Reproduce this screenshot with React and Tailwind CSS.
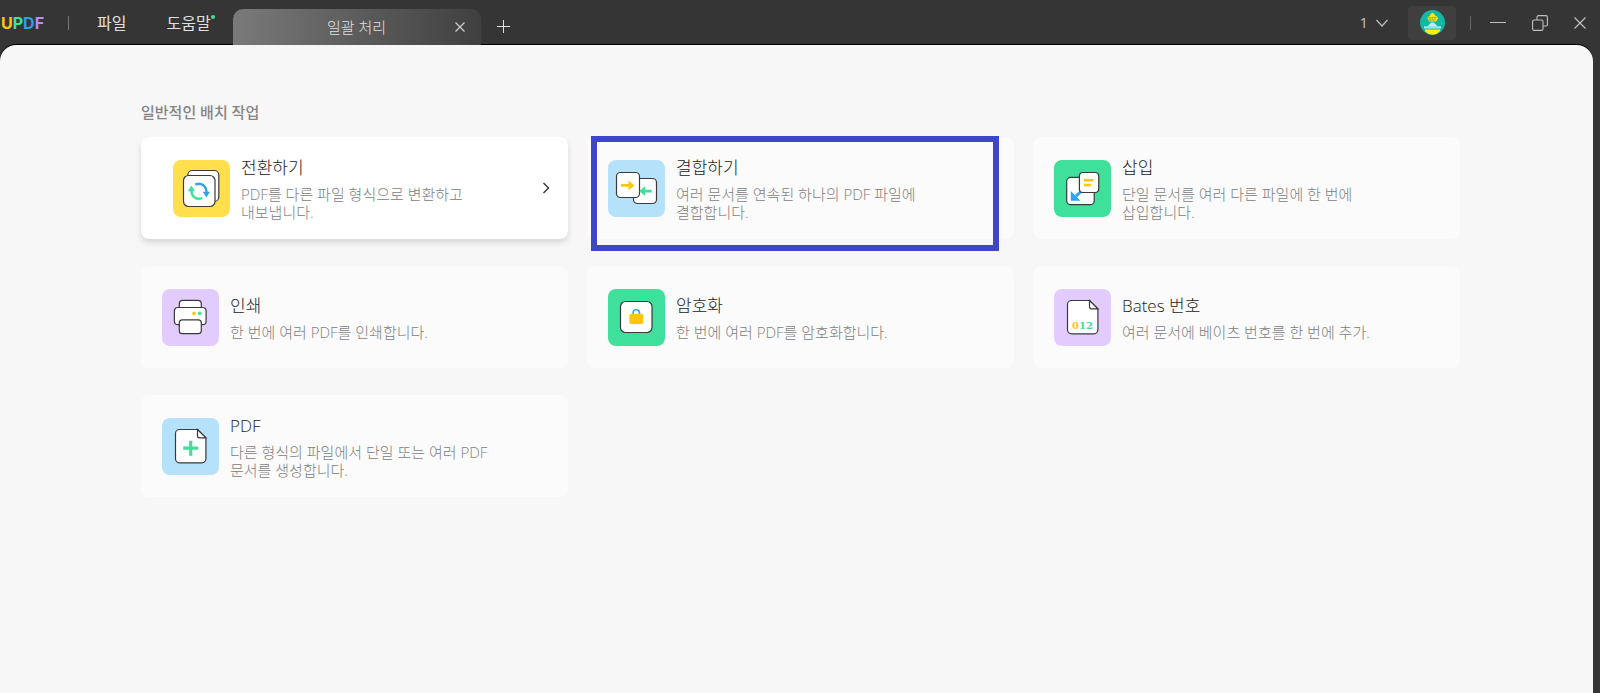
import React from 'react';

const ink = { stroke: '#3a3a3a', strokeWidth: 1.2, fill: '#fff' };

function ConvertIcon() {
  return (
    <svg viewBox="0 0 57 57" className="w-full h-full">
      <path d="M14.800 16v-1a4.500 4.500 0 0 1 4.500-4.500h22a4.500 4.500 0 0 1 4.500 4.500v22a4.500 4.500 0 0 1-4.500 4.500h-1z" {...ink} />
      <rect x="10.5" y="15.5" width="31.5" height="31" rx="5" {...ink} />
      <path d="M22.3 24.6C28 21.8 33.3 26 33.4 32" fill="none" stroke="#2ea3f2" strokeWidth="2.4" />
      <path d="M29.800 31.8h7.2l-3.600 5.8z" fill="#2ea3f2" />
      <path d="M18.4 30.5C18.4 36.5 23.5 40.5 29.3 38" fill="none" stroke="#3ee09c" strokeWidth="2.4" />
      <path d="M14.800 31.200h7.2l-3.600-5.8z" fill="#3ee09c" />
    </svg>
  );
}

function CombineIcon() {
  return (
    <svg viewBox="0 0 57 57" className="w-full h-full">
      <rect x="25.5" y="18.5" width="23" height="25" rx="4" {...ink} />
      <rect x="8.5" y="12.5" width="23" height="25" rx="4" {...ink} />
      <path d="M13 24.1h7.5v-3.5l6 4.8-6 4.8v-3.5H13z" fill="#ffc60b" />
      <path d="M43.7 29.700h-6.5v-3.4l-6 4.8 6 4.8v-3.4h6.5z" fill="#3ee09c" />
    </svg>
  );
}

function InsertIcon() {
  return (
    <svg viewBox="0 0 57 57" className="w-full h-full">
      <rect x="12.7" y="17.4" width="27.5" height="27.3" rx="4" {...ink} />
      <path d="M27 31.500l-5 4.600" stroke="#2ea3f2" strokeWidth="3" />
      <path d="M16.800 31v9.700h9.700z" fill="#2ea3f2" />
      <rect x="25.4" y="12.5" width="19.3" height="20" rx="3.5" {...ink} />
      <path d="M30 20.3h9.6M30 25h7" stroke="#ffc60b" strokeWidth="2.4" />
    </svg>
  );
}

function PrintIcon() {
  return (
    <svg viewBox="0 0 57 57" className="w-full h-full">
      <rect x="17.3" y="11.4" width="22" height="14" rx="3.5" {...ink} />
      <rect x="12.4" y="18.5" width="31.7" height="17.2" rx="3.5" {...ink} />
      <rect x="17.3" y="30.8" width="22" height="13.9" rx="3" {...ink} />
      <circle cx="32" cy="24.4" r="1.8" fill="#ffc60b" />
      <circle cx="37.7" cy="24.4" r="1.8" fill="#3ee09c" />
    </svg>
  );
}

function EncryptIcon() {
  return (
    <svg viewBox="0 0 57 57" className="w-full h-full">
      <rect x="12.5" y="12.5" width="31.5" height="31" rx="5" {...ink} />
      <path d="M25.1 25v-1a3.2 3.2 0 0 1 6.4 0v1" fill="none" stroke="#2ea3f2" strokeWidth="1.6" />
      <rect x="21.3" y="24.7" width="14" height="10.4" rx="1.8" fill="#ffc60b" />
    </svg>
  );
}

function PageShape() {
  return (
    <>
      <path d="M17.5 11.5h18l8.4 8.3v21a4 4 0 0 1-4 4H17.5a4 4 0 0 1-4-4V15.5a4 4 0 0 1 4-4z" {...ink} />
      <path d="M35.5 11.5v6.3a2 2 0 0 0 2 2h6.400z" {...ink} />
    </>
  );
}

function BatesIcon() {
  return (
    <svg viewBox="0 0 57 57" className="w-full h-full">
      <PageShape />
      <text x="18" y="39.5" fontSize="10" className="font-['DejaVu_Serif',serif] font-bold" fill="#3ee09c">
        <tspan fill="#ffc60b">0</tspan>12
      </text>
    </svg>
  );
}

function CreateIcon() {
  return (
    <svg viewBox="0 0 57 57" className="w-full h-full">
      <PageShape />
      <path d="M28.7 22.7v15M21.2 30.2h15" stroke="#3ee09c" strokeWidth="3.2" />
    </svg>
  );
}

function Avatar() {
  return (
    <svg viewBox="0 0 25 25" className="w-[25px] h-[25px]">
      <circle cx="12.5" cy="12.5" r="12.5" fill="#12b8a6" />
      <path d="M7.5 8.5c0-1.500 1-2.300 2.300-2.600 0-1.500 1.400-2.500 2.700-3.200 1.200.8 2.700 1.600 2.900 3.200 1.500.3 2.700 1.200 2.700 2.700L16 11.500H9.500z" fill="#f4e51c" />
      <path d="M8.500 7.800h8M9.500 9.900h6" stroke="#7d8320" strokeWidth="1" strokeDasharray="2 .8" />
      <path d="M8 16.500c.5-2 2.300-2.500 3.300-4h2.400c1 1.500 3 2 3.500 4z" fill="#c4ecf7" />
      <rect x="4" y="16.3" width="17" height="2.2" fill="#a9e4ee" />
      <path d="M5 19.6h15v1.500c-2 2.300-4.500 3.600-7.500 3.600S7 23.400 5 21.100z" fill="#fff200" />
    </svg>
  );
}

const tasks = [
  {
    title: '전환하기',
    desc: 'PDF를 다른 파일 형식으로 변환하고 내보냅니다.',
    icon: ConvertIcon,
    tile: 'bg-[#ffe04c]',
    active: true,
  },
  {
    title: '결합하기',
    desc: '여러 문서를 연속된 하나의 PDF 파일에 결합합니다.',
    icon: CombineIcon,
    tile: 'bg-[#b5e1fb]',
    marked: true,
  },
  {
    title: '삽입',
    desc: '단일 문서를 여러 다른 파일에 한 번에 삽입합니다.',
    icon: InsertIcon,
    tile: 'bg-[#3ee09c]',
  },
  { title: '인쇄', desc: '한 번에 여러 PDF를 인쇄합니다.', icon: PrintIcon, tile: 'bg-[#e2ccff]' },
  { title: '암호화', desc: '한 번에 여러 PDF를 암호화합니다.', icon: EncryptIcon, tile: 'bg-[#3ee09c]' },
  { title: 'Bates 번호', desc: '여러 문서에 베이츠 번호를 한 번에 추가.', icon: BatesIcon, tile: 'bg-[#e2ccff]' },
  {
    title: 'PDF',
    desc: '다른 형식의 파일에서 단일 또는 여러 PDF 문서를 생성합니다.',
    icon: CreateIcon,
    tile: 'bg-[#b5e1fb]',
  },
];

function TaskCard({ task }) {
  const Icon = task.icon;
  return (
    <button
      className={`relative flex items-center gap-[11px] min-h-[102px] rounded-lg text-left ${
        task.active ? 'bg-white pl-8 pr-4 shadow-[0_4px_6px_rgba(0,0,0,0.12)]' : 'bg-[#fbfbfb] pl-[21px] pr-4'
      }`}
    >
      <span className={`w-[57px] h-[57px] shrink-0 rounded-lg ${task.tile}`}>
        <Icon />
      </span>
      <span className="flex flex-col gap-1 max-w-[260px]">
        <span className="text-[17px] leading-[26px] font-light text-[#222]">{task.title}</span>
        <span className="text-[15px] leading-[18px] font-light text-[#808080] break-keep">{task.desc}</span>
      </span>
      {task.active && (
        <svg viewBox="0 0 12 12" className="w-3 h-3 ml-auto" fill="none" stroke="#333" strokeWidth="1.4">
          <path d="M3.5 1l5 5-5 5" />
        </svg>
      )}
      {/* Highlight frame */}
      {task.marked && (
        <span className="absolute -top-px left-1 right-[15px] -bottom-3 border-[6px] border-[#3f45cb]"></span>
      )}
    </button>
  );
}

export default function App() {
  return (
    <div className="min-h-screen flex flex-col bg-[#353535] font-['Open_Sans','Noto_Sans_CJK_KR',sans-serif]">
      {/* Title bar */}
      <header className="relative z-10 h-[45px] flex items-center justify-between text-[#e0e0e0]">
        <div className="flex items-center self-stretch">
          <span className="pl-px w-[68px] font-['Inter',sans-serif] font-bold text-base">
            <span className="text-[#ffc60b]">U</span>
            <span className="text-[#3ee09c]">P</span>
            <span className="text-[#2e9fe6]">D</span>
            <span className="text-[#b98cff]">F</span>
          </span>
          <span className="w-px h-3.5 bg-[#777]"></span>
          <button className="ml-7 text-base">파일</button>
          <button className="relative ml-10 text-base">
            도움말
            <span className="absolute top-1 -right-1 w-1 h-1 rounded-full bg-[#3ee09c]"></span>
          </button>
          <div className="self-end ml-[22px] w-[248px] h-9 flex items-center rounded-t-[10px] bg-linear-to-r from-[#7a7a7a] to-[#404040] pl-[58px] pr-4">
            <span className="flex-1 text-center text-[15px] leading-5 font-light text-[#e0e0e0]">일괄 처리</span>
            <button aria-label="탭 닫기" className="ml-8">
              <svg viewBox="0 0 10 10" className="w-2.5 h-2.5" stroke="#d0d0d0" strokeWidth="1.2">
                <path d="M.5.5l9 9M9.5.5l-9 9" />
              </svg>
            </button>
          </div>
          <button aria-label="새 탭" className="ml-4 mt-2">
            <svg viewBox="0 0 13 13" className="w-[13px] h-[13px]" stroke="#e0e0e0">
              <path d="M6.5 0v13M0 6.5h13" />
            </svg>
          </button>
        </div>

        <div className="flex items-center pr-3.5">
          <button className="flex items-center gap-2 text-[15px] text-[#c0c0c0]">
            1
            <svg viewBox="0 0 12 8" className="w-3 h-2" fill="none" stroke="#c0c0c0" strokeWidth="1.2">
              <path d="M.5 1L6 7l5.5-6" />
            </svg>
          </button>
          <button aria-label="계정" className="ml-5 w-12 h-[34px] flex items-center justify-center rounded bg-[#3f3f3f]">
            <Avatar />
          </button>
          <span className="ml-3.5 w-px h-3.5 bg-[#666]"></span>
          <button aria-label="최소화" className="ml-[19px]">
            <svg viewBox="0 0 16 16" className="w-4 h-4" stroke="#c0c0c0">
              <path d="M0 7.5h16" />
            </svg>
          </button>
          <button aria-label="이전 크기로" className="ml-[26px]">
            <svg viewBox="0 0 16 16" className="w-4 h-4" fill="none" stroke="#c0c0c0" strokeWidth="1.1">
              <rect x=".6" y="5" width="10.4" height="10.4" rx="1.5" />
              <path d="M5 5V2A1.500 1.500 0 0 1 6.500.6H14A1.400 1.400 0 0 1 15.400 2v7.500A1.500 1.500 0 0 1 14 11h-3" />
            </svg>
          </button>
          <button aria-label="닫기" className="ml-[26px]">
            <svg viewBox="0 0 12 12" className="w-3 h-3" stroke="#c0c0c0" strokeWidth="1.2">
              <path d="M.5.5l11 11M11.5.5l-11 11" />
            </svg>
          </button>
        </div>
      </header>

      {/* Batch tasks */}
      <main className="flex-1 mr-[7px] rounded-t-2xl bg-[#f7f7f7] shadow-[0_-1px_0_#000] pt-[57px] pb-10 pl-[141px] pr-[133px]">
        <h1 className="text-[15px] leading-5 font-medium text-[#858585]">일반적인 배치 작업</h1>
        <div className="mt-[15px] grid grid-cols-3 gap-x-[19px] gap-y-[27px]">
          {tasks.map((task) => (
            <TaskCard key={task.title} task={task} />
          ))}
        </div>
      </main>
    </div>
  );
}
